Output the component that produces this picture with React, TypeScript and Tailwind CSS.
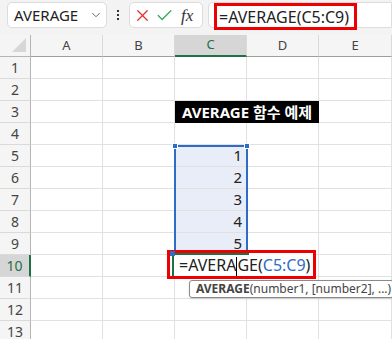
import { ChevronDown, X, Check } from "lucide-react";

const cols = ["A", "B", "C", "D", "E"];
const rows = [1, 2, 3, 4, 5, 6, 7, 8, 9, 10, 11, 12, 13];
const values: Record<number, string> = { 5: "1", 6: "2", 7: "3", 8: "4", 9: "5" };

const font = { fontFamily: '"Segoe UI", "Noto Sans", "Noto Sans CJK KR", sans-serif' };

function Handle({ className }: { className: string }) {
  return <div className={`absolute w-[6px] h-[6px] bg-[#2f6cc6] border border-white ${className}`} />;
}

export default function App() {
  return (
    <div className="w-[392px] h-[339px] overflow-hidden bg-white text-[#222]" style={font}>
      {/* formula bar */}
      <div className="h-[35px] bg-[#f3f3f3] flex items-start pt-[2px] pl-[7px]">
        <div className="w-[100px] h-[26px] bg-white border border-[#dcdcdc] rounded-[5px] flex items-center pl-[6px] pr-[3px]">
          <span className="flex-1 text-[15px] leading-none text-[#222]">AVERAGE</span>
          <ChevronDown size={14} strokeWidth={1.5} className="text-[#555]" />
        </div>
        <div className="w-[22px] h-[26px] flex flex-col items-center justify-center gap-[2px]">
          <span className="w-[2px] h-[2px] bg-[#333]" />
          <span className="w-[2px] h-[2px] bg-[#333]" />
          <span className="w-[2px] h-[2px] bg-[#333]" />
        </div>
        <div className="w-[74px] h-[26px] bg-white border border-[#dcdcdc] rounded-[5px] flex items-center pl-[3px] gap-[3px]">
          <X size={19} strokeWidth={1.6} className="text-[#e0312b]" />
          <Check size={19} strokeWidth={1.6} className="text-[#3aa55b]" />
          <span className="ml-[4px] text-[17px] italic leading-none text-[#333]" style={{ fontFamily: '"Liberation Serif", serif' }}>
            fx
          </span>
        </div>
        <div className="ml-[5px] flex-1 h-[26px] bg-white border border-[#dcdcdc] rounded-l-[5px] relative">
          <div className="absolute left-[5px] top-[0px] w-[143px] h-[27px] border-[3px] border-[#ee0000] flex items-center pl-[2px]">
            <span className="text-[16px] leading-none text-[#222]">=AVERAGE(C5:C9)</span>
          </div>
        </div>
      </div>

      {/* sheet */}
      <div className="relative">
        <div className="grid grid-cols-[31px_72px_72px_72px_72px_73px] grid-rows-[22px_repeat(13,22px)] text-[13px]">
          {/* corner */}
          <div className="relative bg-[#f5f5f5] border-r border-b border-[#b5b5b5]">
            <div
              className="absolute right-[4px] bottom-[4px] w-[14px] h-[14px] bg-[#d7d7d7]"
              style={{ clipPath: "polygon(100% 0, 100% 100%, 0 100%)" }}
            />
          </div>
          {cols.map((c) => (
            <div
              key={c}
              className={`flex items-center justify-center border-r border-[#dadada] ${
                c === "C"
                  ? "bg-[#d6d6d6] border-b-2 border-b-[#1e7145] text-[#1e7145]"
                  : "bg-[#f5f5f5] border-b border-b-[#9e9e9e] text-[#444]"
              }`}
            >
              {c}
            </div>
          ))}
          {rows.map((r) => (
            <div key={`r${r}`} className="contents">
              <div
                className={`flex items-center justify-center text-[14px] border-b border-[#dadada] ${
                  r === 10
                    ? "bg-[#d6d6d6] border-r-2 border-r-[#1e7145] text-[#1e7145]"
                    : "bg-[#f5f5f5] border-r border-r-[#b5b5b5] text-[#444]"
                }`}
              >
                {r}
              </div>
              {cols.map((c) => (
                <div
                  key={`${c}${r}`}
                  className={`border-r border-b border-[#e1e1e1] flex items-center justify-end pr-[4px] text-[15px] ${
                    c === "C" && values[r] ? "bg-[#e8edf7]" : ""
                  }`}
                >
                  {c === "C" ? values[r] : ""}
                </div>
              ))}
            </div>
          ))}
        </div>

        {/* title C3:D3 */}
        <div className="absolute left-[175px] top-[66px] w-[144px] h-[22px] bg-black flex items-center justify-center">
          <span className="text-white font-bold text-[15px] leading-none">AVERAGE 함수 예제</span>
        </div>

        {/* selected range C5:C9 */}
        <div className="absolute left-[174px] top-[110px] w-[74px] h-[111px] border-2 border-[#2f6cc6]" />
        <Handle className="left-[172px] top-[108px]" />
        <Handle className="left-[244px] top-[108px]" />
        <Handle className="left-[172px] top-[217px]" />
        <Handle className="left-[244px] top-[217px]" />

        {/* active cell C10 */}
        <div className="absolute left-[167px] top-[215px] w-[149px] h-[29px] border-[3px] border-[#ee0000] bg-white flex items-center pl-[9px]">
          <span className="text-[16px] leading-none text-[#222] relative">
            =AVERA
            <span className="inline-block w-[1px] h-[19px] bg-black align-middle -my-[4px]" />
            GE(<span className="text-[#2f6cc6]">C5:C9</span>)
          </span>
        </div>
        <div className="absolute left-[172px] top-[218px] w-[77px] h-[2px] bg-[#1e7145]" />
        <div className="absolute left-[172px] top-[219px] w-[2px] h-[22px] bg-[#1e7145]" />
        <div className="absolute left-[170px] top-[216px] w-[5px] h-[5px] bg-[#2f6cc6]" />

        {/* tooltip */}
        <div className="absolute left-[189px] top-[245px] w-[205px] h-[18px] bg-white border border-[#8a8a8a] rounded-[3px] flex items-center pl-[6px] text-[12px] text-[#444] shadow-sm whitespace-nowrap">
          <span className="font-bold">AVERAGE</span>(number1, [number2], ...)
        </div>
      </div>
    </div>
  );
}
